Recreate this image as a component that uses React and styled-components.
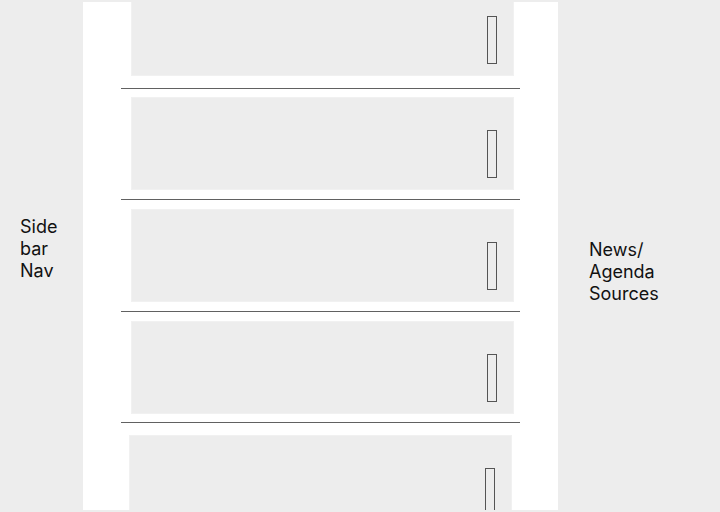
import React from "react";
import styled, { createGlobalStyle } from "styled-components";

const Global = createGlobalStyle`
  html, body { margin: 0; padding: 0; background: #ededed; }
  body { font-family: Inter, "Noto Sans", sans-serif; }
  * { box-sizing: border-box; }
`;

const Page = styled.div`
  width: 720px;
  height: 512px;
  display: grid;
  grid-template-columns: 83px 475px 1fr;
  background: #ededed;
  overflow: hidden;
`;

const SidePanel = styled.aside`
  padding: ${(p) => p.$top}px 0 0 ${(p) => p.$left}px;
  font-size: 18px;
  line-height: 22px;
  color: #111111;
`;

const Feed = styled.main`
  margin: 2px 0;
  background: #ffffff;
  overflow: hidden;
  padding: 0 38px;
`;

const List = styled.div`
  margin-top: -19px;
  display: flex;
  flex-direction: column;
`;

const Card = styled.div`
  height: 93px;
  flex: none;
  margin: 0 ${(p) => (p.$shift ? 8 : 6)}px 0 ${(p) => (p.$shift ? 8 : 10)}px;
  background: #ededed;
  border: 1px solid #f1f1f1;
  display: flex;
  justify-content: flex-end;
  align-items: flex-start;
  padding: 32px 16px 0 0;
`;

const Handle = styled.div`
  width: 10px;
  height: 48px;
  border: 1px solid #555555;
  background: #ededed;
`;

const Separator = styled.hr`
  margin: ${(p) => p.$m};
  border: none;
  height: 1px;
  background: #616161;
  flex: none;
`;

const gaps = ["12px 0 8px", "9px 0 9px", "9px 0 9px", "8px 0 12px"];

export default function App() {
  return (
    <>
      <Global />
      <Page>
        <SidePanel $top={216} $left={20}>
          Side
          <br />
          bar
          <br />
          Nav
        </SidePanel>
        <Feed>
          <List>
            {[0, 1, 2, 3, 4].map((i) => (
              <React.Fragment key={i}>
                <Card $shift={i === 4}>
                  <Handle />
                </Card>
                {i < 4 && <Separator $m={gaps[i]} />}
              </React.Fragment>
            ))}
          </List>
        </Feed>
        <SidePanel $top={239} $left={31}>
          News/
          <br />
          Agenda
          <br />
          Sources
        </SidePanel>
      </Page>
    </>
  );
}
